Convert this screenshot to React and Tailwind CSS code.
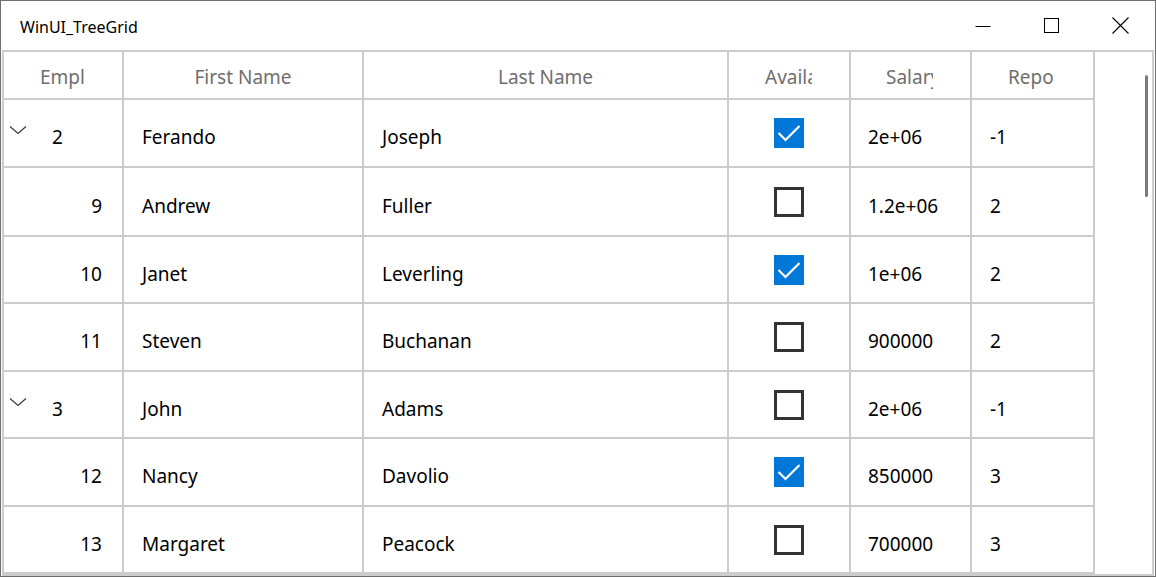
import React from "react";

const rows = [
  { id: "2", parent: true, first: "Ferando", last: "Joseph", avail: true, salary: "2e+06", rep: "-1", h: "h-[68px]" },
  { id: "9", first: "Andrew", last: "Fuller", avail: false, salary: "1.2e+06", rep: "2", h: "h-[69px]" },
  { id: "10", first: "Janet", last: "Leverling", avail: true, salary: "1e+06", rep: "2", h: "h-[67px]" },
  { id: "11", first: "Steven", last: "Buchanan", avail: false, salary: "900000", rep: "2", h: "h-[68px]" },
  { id: "3", parent: true, first: "John", last: "Adams", avail: false, salary: "2e+06", rep: "-1", h: "h-[67px]" },
  { id: "12", first: "Nancy", last: "Davolio", avail: true, salary: "850000", rep: "3", h: "h-[68px]" },
  { id: "13", first: "Margaret", last: "Peacock", avail: false, salary: "700000", rep: "3", h: "h-[67px]" },
  { id: "", first: "", last: "", avail: null, salary: "", rep: "", h: "h-[68px]" },
];

const cols = [
  { title: "EmployeeID", w: "w-[120px]", p: "pl-[36px] pr-[37px]" },
  { title: "First Name", w: "w-[240px]", p: "px-[36px]" },
  { title: "Last Name", w: "w-[365px]", p: "px-[36px]" },
  { title: "Availability", w: "w-[122px]", p: "pl-[36px] pr-[37px]" },
  { title: "Salary", w: "w-[121px]", p: "pl-[35px] pr-[37px]" },
  { title: "ReportsTo", w: "w-[123px]", p: "pl-[36px] pr-[39px]" },
];

function CheckBox({ checked }) {
  if (checked) {
    return (
      <div className="w-[30px] h-[30px] bg-[#0078d7] flex items-center justify-center">
        <svg width="30" height="30" viewBox="0 0 30 30">
          <path d="M4.5 15 L11.5 22 L25.5 8" fill="none" stroke="#ffffff" strokeWidth="2.2" />
        </svg>
      </div>
    );
  }
  return <div className="w-[30px] h-[30px] border-[3px] border-[#333333] bg-white" />;
}

function Chevron() {
  return (
    <svg width="18" height="10" viewBox="0 0 18 10" className="block">
      <path d="M1 1.5 L9 8.5 L17 1.5" fill="none" stroke="#333333" strokeWidth="1.1" />
    </svg>
  );
}

export default function App() {
  const cell = "border-r-2 border-b-2 border-[#cccccc] shrink-0 overflow-hidden";
  return (
    <div className="w-[1156px] h-[577px] border border-[#6e6e6e] bg-white flex flex-col font-['Noto_Sans',sans-serif] text-black">
      {/* Title bar */}
      <div className="h-[49px] flex items-center shrink-0">
        <div className="pl-[19px] pt-[2px] text-[16px] flex-1 text-[#000000]">WinUI_TreeGrid</div>
        <div className="flex h-full">
          <div className="w-[69px] h-full flex items-center justify-center">
            <svg width="16" height="16" viewBox="0 0 16 16"><path d="M0.5 8.5 H15.5" stroke="#000" strokeWidth="1" /></svg>
          </div>
          <div className="w-[69px] h-full flex items-center justify-center">
            <svg width="16" height="16" viewBox="0 0 16 16"><rect x="0.5" y="0.5" width="14" height="14" fill="none" stroke="#000" strokeWidth="1" /></svg>
          </div>
          <div className="w-[69px] h-full flex items-center justify-center">
            <svg width="17" height="17" viewBox="0 0 17 17"><path d="M0.5 0.5 L16.5 16.5 M16.5 0.5 L0.5 16.5" stroke="#000" strokeWidth="1.1" /></svg>
          </div>
        </div>
      </div>
      {/* Grid */}
      <div className="px-[1px]">
        <div className="h-[526px] border-2 border-[#cccccc] flex overflow-hidden">
          <div className="w-[1091px] shrink-0 flex flex-col">
            {/* header */}
            <div className="flex h-[48px] shrink-0">
              {cols.map((c) => (
                <div key={c.title} className={`${cell} ${c.w} ${c.p} h-full flex items-center pt-[5px]`}>
                  <div className="w-full text-center whitespace-nowrap overflow-hidden text-[19px] text-[#6e6e6e]">{c.title}</div>
                </div>
              ))}
            </div>
            {rows.map((r, i) => (
              <div key={i} className={`flex shrink-0 ${r.h}`}>
                <div className={`${cell} w-[120px] h-full relative flex items-center text-[19px]`}>
                  {r.parent ? (
                    <>
                      <div className="absolute left-[5px] top-[25px]"><Chevron /></div>
                      <div className="pl-[48px] pt-[9px]">{r.id}</div>
                    </>
                  ) : (
                    <div className="w-full text-right pr-[20px] pt-[9px]">{r.id}</div>
                  )}
                </div>
                <div className={`${cell} w-[240px] h-full flex items-center pl-[18px] pt-[9px] text-[19px]`}>{r.first}</div>
                <div className={`${cell} w-[365px] h-full flex items-center pl-[18px] pt-[9px] text-[19px]`}>{r.last}</div>
                <div className={`${cell} w-[122px] h-full flex items-center justify-center`}>
                  {r.avail !== null && <CheckBox checked={r.avail} />}
                </div>
                <div className={`${cell} w-[121px] h-full flex items-center pl-[17px] pt-[9px] text-[19px]`}>{r.salary}</div>
                <div className={`${cell} w-[123px] h-full flex items-center pl-[18px] pt-[9px] text-[19px]`}>{r.rep}</div>
              </div>
            ))}
          </div>
          <div className="flex-1 relative">
            <div className="absolute left-[50px] top-[23px] w-[3px] h-[122px] rounded-full bg-[#7a7a7a]" />
          </div>
        </div>
      </div>
    </div>
  );
}
